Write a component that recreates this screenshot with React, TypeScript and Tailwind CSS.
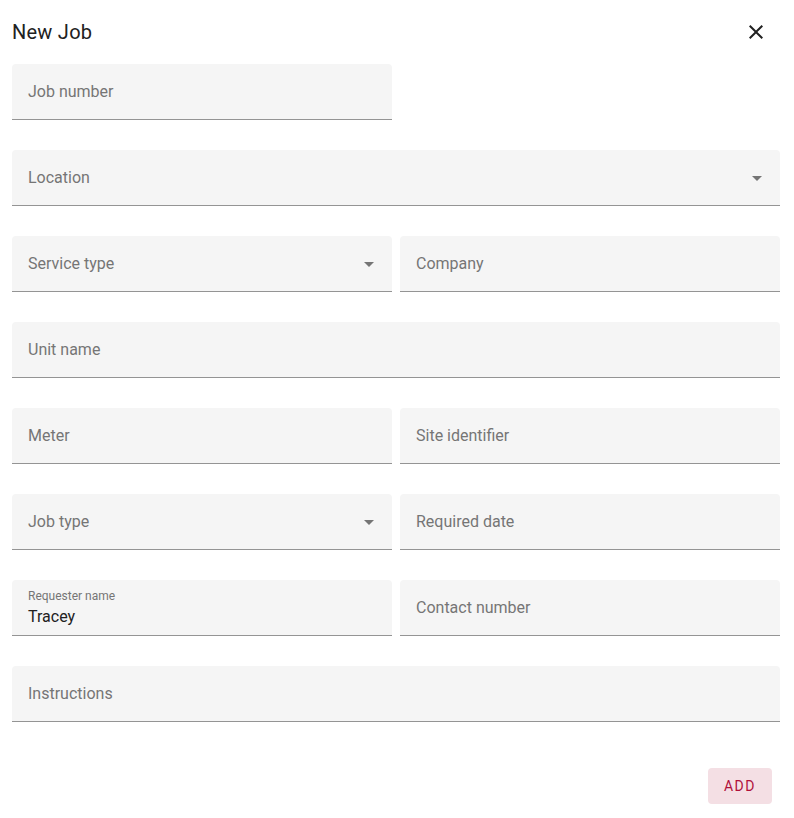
import React from "react";

interface FieldProps {
  label: string;
  value?: string;
  select?: boolean;
  className?: string;
}

const ArrowDown = () => (
  <svg width="24" height="24" viewBox="0 0 24 24" className="fill-[#757575] shrink-0">
    <path d="M7 10l5 5 5-5z" />
  </svg>
);

const Field: React.FC<FieldProps> = ({ label, value, select, className }) => {
  return (
    <div
      className={`h-[56px] bg-[#f5f5f5] rounded-t-[4px] border-b border-[#949494] flex items-center justify-between pl-4 pr-[11px] ${className ?? ""}`}
    >
      {value ? (
        <div className="flex flex-col self-start pt-[9px] gap-[2px]">
          <span className="text-[12px] leading-[14px] text-[#757575]">{label}</span>
          <span className="text-[16px] leading-[24px] text-[#212121]">{value}</span>
        </div>
      ) : (
        <span className="text-[16px] leading-[24px] text-[#757575]">{label}</span>
      )}
      {select && <ArrowDown />}
    </div>
  );
};

const App: React.FC = () => {
  return (
    <div
      className="w-[794px] h-[818px] bg-white text-[#212121]"
      style={{ fontFamily: "Roboto, 'Liberation Sans', sans-serif" }}
    >
      <div className="w-[768px] ml-[12px]">
        <div className="h-[64px] flex items-center justify-between">
          <h1 className="text-[20px] leading-[24px] font-normal tracking-[0.25px] text-[#212121]">New Job</h1>
          <button className="w-[24px] h-[24px] mr-[12px] flex items-center justify-center">
            <svg width="24" height="24" viewBox="0 0 24 24" className="fill-[#212121]">
              <path d="M19 6.41 17.59 5 12 10.59 6.41 5 5 6.41 10.59 12 5 17.59 6.41 19 12 13.41 17.59 19 19 17.59 13.41 12z" />
            </svg>
          </button>
        </div>
        <div className="flex flex-col gap-[30px]">
          <div className="flex">
            <Field label="Job number" className="w-[380px]" />
          </div>
          <Field label="Location" select />
          <div className="flex gap-2">
            <Field label="Service type" select className="flex-1" />
            <Field label="Company" className="flex-1" />
          </div>
          <Field label="Unit name" />
          <div className="flex gap-2">
            <Field label="Meter" className="flex-1" />
            <Field label="Site identifier" className="flex-1" />
          </div>
          <div className="flex gap-2">
            <Field label="Job type" select className="flex-1" />
            <Field label="Required date" className="flex-1" />
          </div>
          <div className="flex gap-2">
            <Field label="Requester name" value="Tracey" className="flex-1" />
            <Field label="Contact number" className="flex-1" />
          </div>
          <Field label="Instructions" />
        </div>
        <div className="flex justify-end mt-[46px] pr-[8px]">
          <button className="w-[64px] h-[36px] rounded-[4px] bg-[#f4dfe4] text-[#b0103a] text-[14px] font-normal tracking-[1.5px]">
            ADD
          </button>
        </div>
      </div>
    </div>
  );
};

export default App;
